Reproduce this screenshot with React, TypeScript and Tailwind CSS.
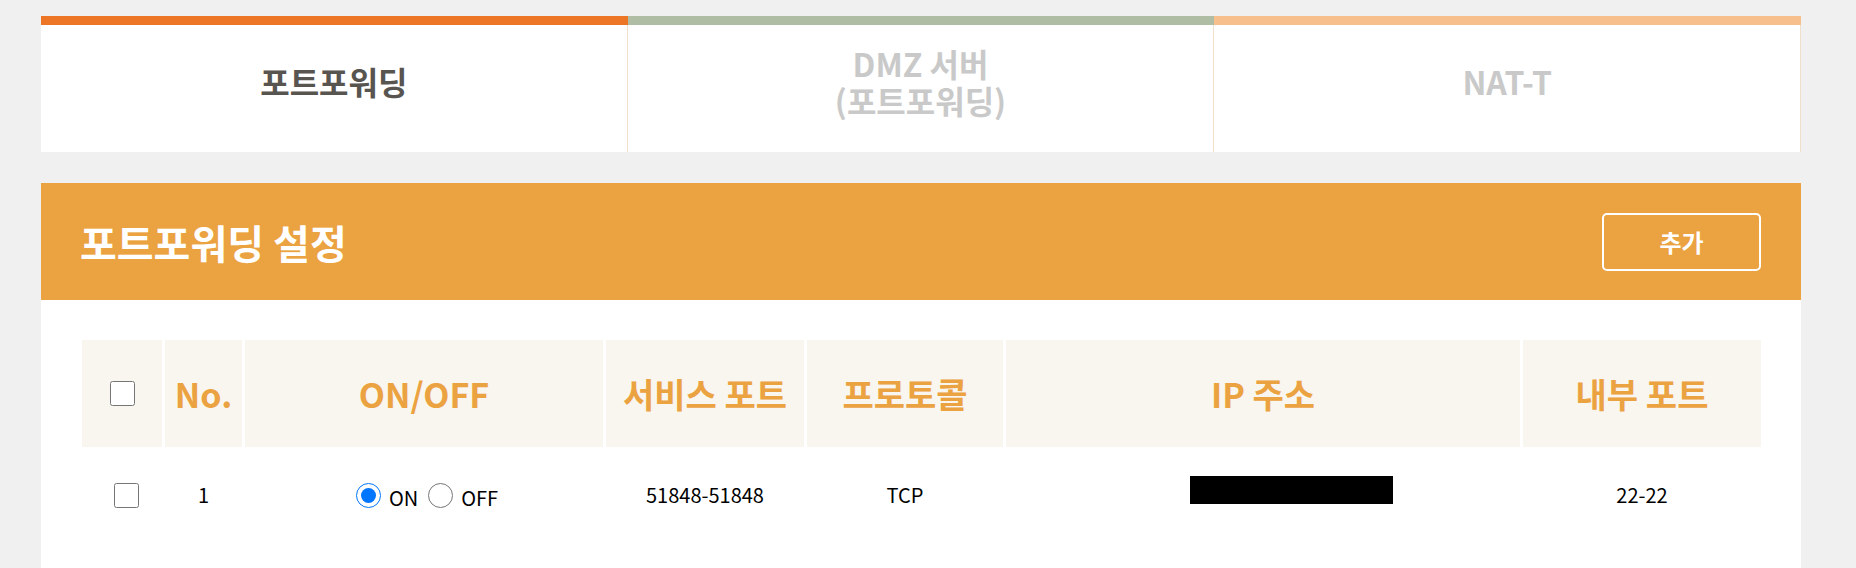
import React from 'react';

const FONT = "font-['Noto_Sans_CJK_KR','Noto_Sans',sans-serif]";

const TABS = [
  { label: ['포트포워딩'], bar: 'bg-[#ec7526]', active: true },
  { label: ['DMZ 서버', '(포트포워딩)'], bar: 'bg-[#aebda3]', active: false },
  { label: ['NAT-T'], bar: 'bg-[#f6bf8c]', active: false },
];

const COLS = ['', 'No.', 'ON/OFF', '서비스 포트', '프로토콜', 'IP 주소', '내부 포트'];

const GRID = 'grid grid-cols-[80px_77px_358px_198px_196px_514px_1fr] gap-x-[3px]';

const App: React.FC = () => {
  return (
    <div className={`h-[568px] overflow-hidden bg-[#f0f0f0] pt-[16px] ${FONT}`}>
      <div className="ml-[41px] w-[1760px]">
        {/* Tabs */}
        <div className="grid grid-cols-3">
          {TABS.map((tab, i) => (
            <div key={i} className="flex flex-col">
              <div className={`h-[9px] ${tab.bar}`} />
              <div className="flex h-[127px] items-center justify-center border-r border-[#efdfcb] bg-white pb-[14px]">
                <p
                  className={`text-center text-[32px] font-bold leading-[37px] ${tab.active ? 'text-[#58544f]' : 'text-[#c9c9c9]'}`}
                >
                  {tab.label.map((line, j) => (
                    <React.Fragment key={line}>
                      {j > 0 && <br />}
                      {line}
                    </React.Fragment>
                  ))}
                </p>
              </div>
            </div>
          ))}
        </div>

        {/* Panel */}
        <div className="mt-[31px] bg-white pb-[25px]">
          <div className="flex h-[117px] items-center justify-between bg-[#eba241] pl-[39px] pr-[40px]">
            <h2 className="text-[40px] font-bold text-white">포트포워딩 설정</h2>
            <button className="h-[58px] w-[159px] rounded-[5px] border-2 border-white text-[24px] font-bold text-white">
              추가
            </button>
          </div>

          <div className="pl-[41px] pr-[40px] pt-[40px]">
            {/* Table header */}
            <div className={GRID}>
              {COLS.map((c, i) => (
                <div key={i} className="flex h-[107px] items-center justify-center bg-[#f9f5ef]">
                  {i === 0 ? (
                    <input type="checkbox" className="h-[25px] w-[25px]" />
                  ) : (
                    <span className="text-[34px] font-bold text-[#eba241]">{c}</span>
                  )}
                </div>
              ))}
            </div>

            {/* Row */}
            <div className={`${GRID} h-[96px] text-[20px] text-black`}>
              <div className="flex items-center justify-center pl-[8px]">
                <input type="checkbox" className="h-[25px] w-[25px]" />
              </div>
              <div className="flex items-center justify-center">1</div>
              <div className="flex items-center justify-center gap-[10px] pl-[6px]">
                <label className="flex items-center gap-[8px]">
                  <input type="radio" name="onoff" defaultChecked className="h-[25px] w-[25px]" />
                  <span className="pt-[6px]">ON</span>
                </label>
                <label className="flex items-center gap-[8px]">
                  <input type="radio" name="onoff" className="h-[25px] w-[25px]" />
                  <span className="pt-[6px]">OFF</span>
                </label>
              </div>
              <div className="flex items-center justify-center">51848-51848</div>
              <div className="flex items-center justify-center">TCP</div>
              <div className="flex items-center justify-center pl-[56px]">
                <span className="mb-[10px] block h-[28px] w-[203px] bg-black" />
              </div>
              <div className="flex items-center justify-center">22-22</div>
            </div>
          </div>
        </div>
      </div>
    </div>
  );
};

export default App;
